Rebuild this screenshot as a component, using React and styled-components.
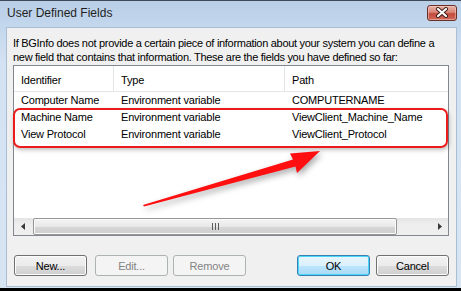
import React from 'react';
import styled, { createGlobalStyle } from 'styled-components';

const GlobalStyle = createGlobalStyle`
  html, body {
    margin: 0;
    padding: 0;
    background: #000;
    overflow: hidden;
  }
  * { box-sizing: border-box; }
`;

const fields = [
  { id: 'Computer Name', type: 'Environment variable', path: 'COMPUTERNAME' },
  { id: 'Machine Name', type: 'Environment variable', path: 'ViewClient_Machine_Name' },
  { id: 'View Protocol', type: 'Environment variable', path: 'ViewClient_Protocol' },
];

function App() {
  return (
    <>
      <GlobalStyle />
      <Window>
        <TitleBar>
          <Title>User Defined Fields</Title>
          <CloseButton>
            <svg width="16" height="11" viewBox="0 0 16 11">
              <path d="M4 2 L12 9 M12 2 L4 9" stroke="#3b1a16" strokeWidth="4" strokeLinecap="round" />
              <path d="M4 2 L12 9 M12 2 L4 9" stroke="#fff" strokeWidth="2.2" strokeLinecap="round" />
            </svg>
          </CloseButton>
        </TitleBar>
        <Client>
          <Description>
            If BGInfo does not provide a certain piece of information about your system you can define a
            new field that contains that information. These are the fields you have defined so far:
          </Description>
          <ListView>
            <HeaderRow>
              <HeaderCell>Identifier</HeaderCell>
              <HeaderCell>Type</HeaderCell>
              <HeaderCell $last>Path</HeaderCell>
            </HeaderRow>
            <ListBody>
              {fields.map((f) => (
                <Row key={f.id}>
                  <Cell>{f.id}</Cell>
                  <Cell>{f.type}</Cell>
                  <Cell>{f.path}</Cell>
                </Row>
              ))}
            </ListBody>
            <HScroll>
              <ScrollArrow>
                <svg width="4" height="7" viewBox="0 0 4 7"><path d="M4 0 L0 3.5 L4 7 Z" fill="#3a3a3a" /></svg>
              </ScrollArrow>
              <Track>
                <Thumb>
                  <Grip />
                </Thumb>
              </Track>
              <ScrollArrow>
                <svg width="4" height="7" viewBox="0 0 4 7"><path d="M0 0 L4 3.5 L0 7 Z" fill="#3a3a3a" /></svg>
              </ScrollArrow>
            </HScroll>
            <Highlight />
            <Annotation width="436" height="171" viewBox="0 0 436 171">
              <g transform="translate(-13,-65)">
                <path
                  d="M142 204 L292 158.5 L289 152.5 L319 150 L296 172 L294.5 165.5 L143 205.5 Z"
                  fill="#ff0f0f"
                />
              </g>
            </Annotation>
          </ListView>
          <ButtonRow>
            <Button $gap={0}>New...</Button>
            <Button $gap={8} disabled>Edit...</Button>
            <Button $gap={5} disabled>Remove</Button>
            <Spacer />
            <Button $default>OK</Button>
            <Button $gap={6}>Cancel</Button>
          </ButtonRow>
        </Client>
      </Window>
    </>
  );
}

const Window = styled.div`
  width: 461px;
  height: 291px;
  display: flex;
  flex-direction: column;
  border-top: 1px solid #3e4a58;
  border-bottom: 3px solid #000;
  background: linear-gradient(to bottom, #b9cfe7 0px, #c3d7ed 26px, #d3e2f2 60px, #d7e5f3 100%);
  font-family: "Liberation Sans", Arial, sans-serif;
`;

const TitleBar = styled.div`
  height: 26px;
  flex: none;
  display: flex;
  align-items: center;
  justify-content: space-between;
  padding: 0 4px 0 7px;
`;

const Title = styled.div`
  font-size: 12px;
  color: #1e1e1e;
  margin-top: -2px;
`;

const CloseButton = styled.div`
  width: 30px;
  height: 16px;
  margin-top: -3px;
  border: 1px solid #6b2f2a;
  border-radius: 3px;
  display: flex;
  align-items: center;
  justify-content: center;
  background: linear-gradient(to bottom, #e9b2a8 0%, #d88577 45%, #c34a3c 55%, #cf6a5a 100%);
  box-shadow: inset 0 0 0 1px rgba(255, 220, 210, 0.45);
`;

const Client = styled.div`
  flex: 1;
  margin: 0 4px 1px 6px;
  background: #f0f0f0;
  border: 1px solid #a9bed5;
  padding: 8px 7px 0 6px;
  display: flex;
  flex-direction: column;
  font-size: 11px;
  color: #000;
`;

const Description = styled.div`
  line-height: 14px;
  letter-spacing: -0.3px;
  white-space: pre-line;
`;

const ListView = styled.div`
  position: relative;
  margin-top: 1px;
  height: 171px;
  border: 1px solid #828790;
  background: #fff;
  display: flex;
  flex-direction: column;
`;

const HeaderRow = styled.div`
  height: 26px;
  flex: none;
  display: grid;
  grid-template-columns: 100px 171px 1fr;
  border-bottom: 1px solid #e6e6e6;
`;

const HeaderCell = styled.div`
  display: flex;
  align-items: center;
  padding-left: 7px;
  padding-top: 2px;
  border-right: ${(p) => (p.$last ? 'none' : '1px solid #e3e5e8')};
  letter-spacing: -0.2px;
`;

const ListBody = styled.div`
  flex: 1;
`;

const Row = styled.div`
  height: 17px;
  display: grid;
  grid-template-columns: 100px 171px 1fr;
`;

const Cell = styled.div`
  padding-left: 7px;
  line-height: 17px;
  white-space: nowrap;
  letter-spacing: -0.2px;
`;

const HScroll = styled.div`
  height: 17px;
  flex: none;
  display: flex;
  background: linear-gradient(to bottom, #e4e4e4, #eeeeee 40%, #eeeeee);
`;

const ScrollArrow = styled.div`
  width: 17px;
  display: flex;
  align-items: center;
  justify-content: center;
`;

const Track = styled.div`
  flex: 1;
  padding: 0 34px 0 2px;
  display: flex;
  align-items: stretch;
`;

const Thumb = styled.div`
  flex: 1;
  border: 1px solid #979797;
  border-radius: 2px;
  background: linear-gradient(to bottom, #f4f4f4 0%, #e8e8e8 50%, #d6d6d6 51%, #cfcfcf 100%);
  box-shadow: inset 0 0 0 1px #fbfbfb;
  display: flex;
  align-items: center;
  justify-content: center;
`;

const Grip = styled.div`
  width: 7px;
  height: 7px;
  background: repeating-linear-gradient(to right, #5a5a5a 0 1px, transparent 1px 3px);
`;

const Highlight = styled.div`
  position: absolute;
  left: -1px;
  top: 42px;
  width: 435px;
  height: 40px;
  border: 2px solid #ec1c1c;
  border-radius: 7px;
  box-shadow: 1px 2px 4px rgba(0, 0, 0, 0.25);
  pointer-events: none;
`;

const Annotation = styled.svg`
  position: absolute;
  left: 0;
  top: 0;
  overflow: visible;
  filter: drop-shadow(2px 3px 3px rgba(0, 0, 0, 0.35));
  pointer-events: none;
`;

const ButtonRow = styled.div`
  margin-top: 19px;
  padding-left: 1px;
  display: flex;
`;

const Spacer = styled.div`
  flex: 1;
`;

const Button = styled.button`
  width: 73px;
  height: 21px;
  margin-left: ${(p) => p.$gap || 0}px;
  padding: 0;
  font-family: "Liberation Sans", Arial, sans-serif;
  font-size: 11px;
  letter-spacing: -0.2px;
  color: #000;
  border-radius: 3px;
  border: 1px solid ${(p) => (p.$default ? '#3c7fb1' : '#707070')};
  background: ${(p) =>
    p.$default
      ? 'linear-gradient(to bottom, #eaf6fd 0%, #d9f0fc 50%, #bee6fd 51%, #a7d9f5 100%)'
      : 'linear-gradient(to bottom, #f2f2f2 0%, #ebebeb 50%, #dddddd 51%, #cfcfcf 100%)'};
  box-shadow: inset 0 0 0 1px ${(p) => (p.$default ? '#48d6fc' : '#fcfcfc')};

  &:disabled {
    border-color: #adb2b5;
    background: #f4f4f4;
    color: #838383;
    box-shadow: none;
  }
`;

export default App;
